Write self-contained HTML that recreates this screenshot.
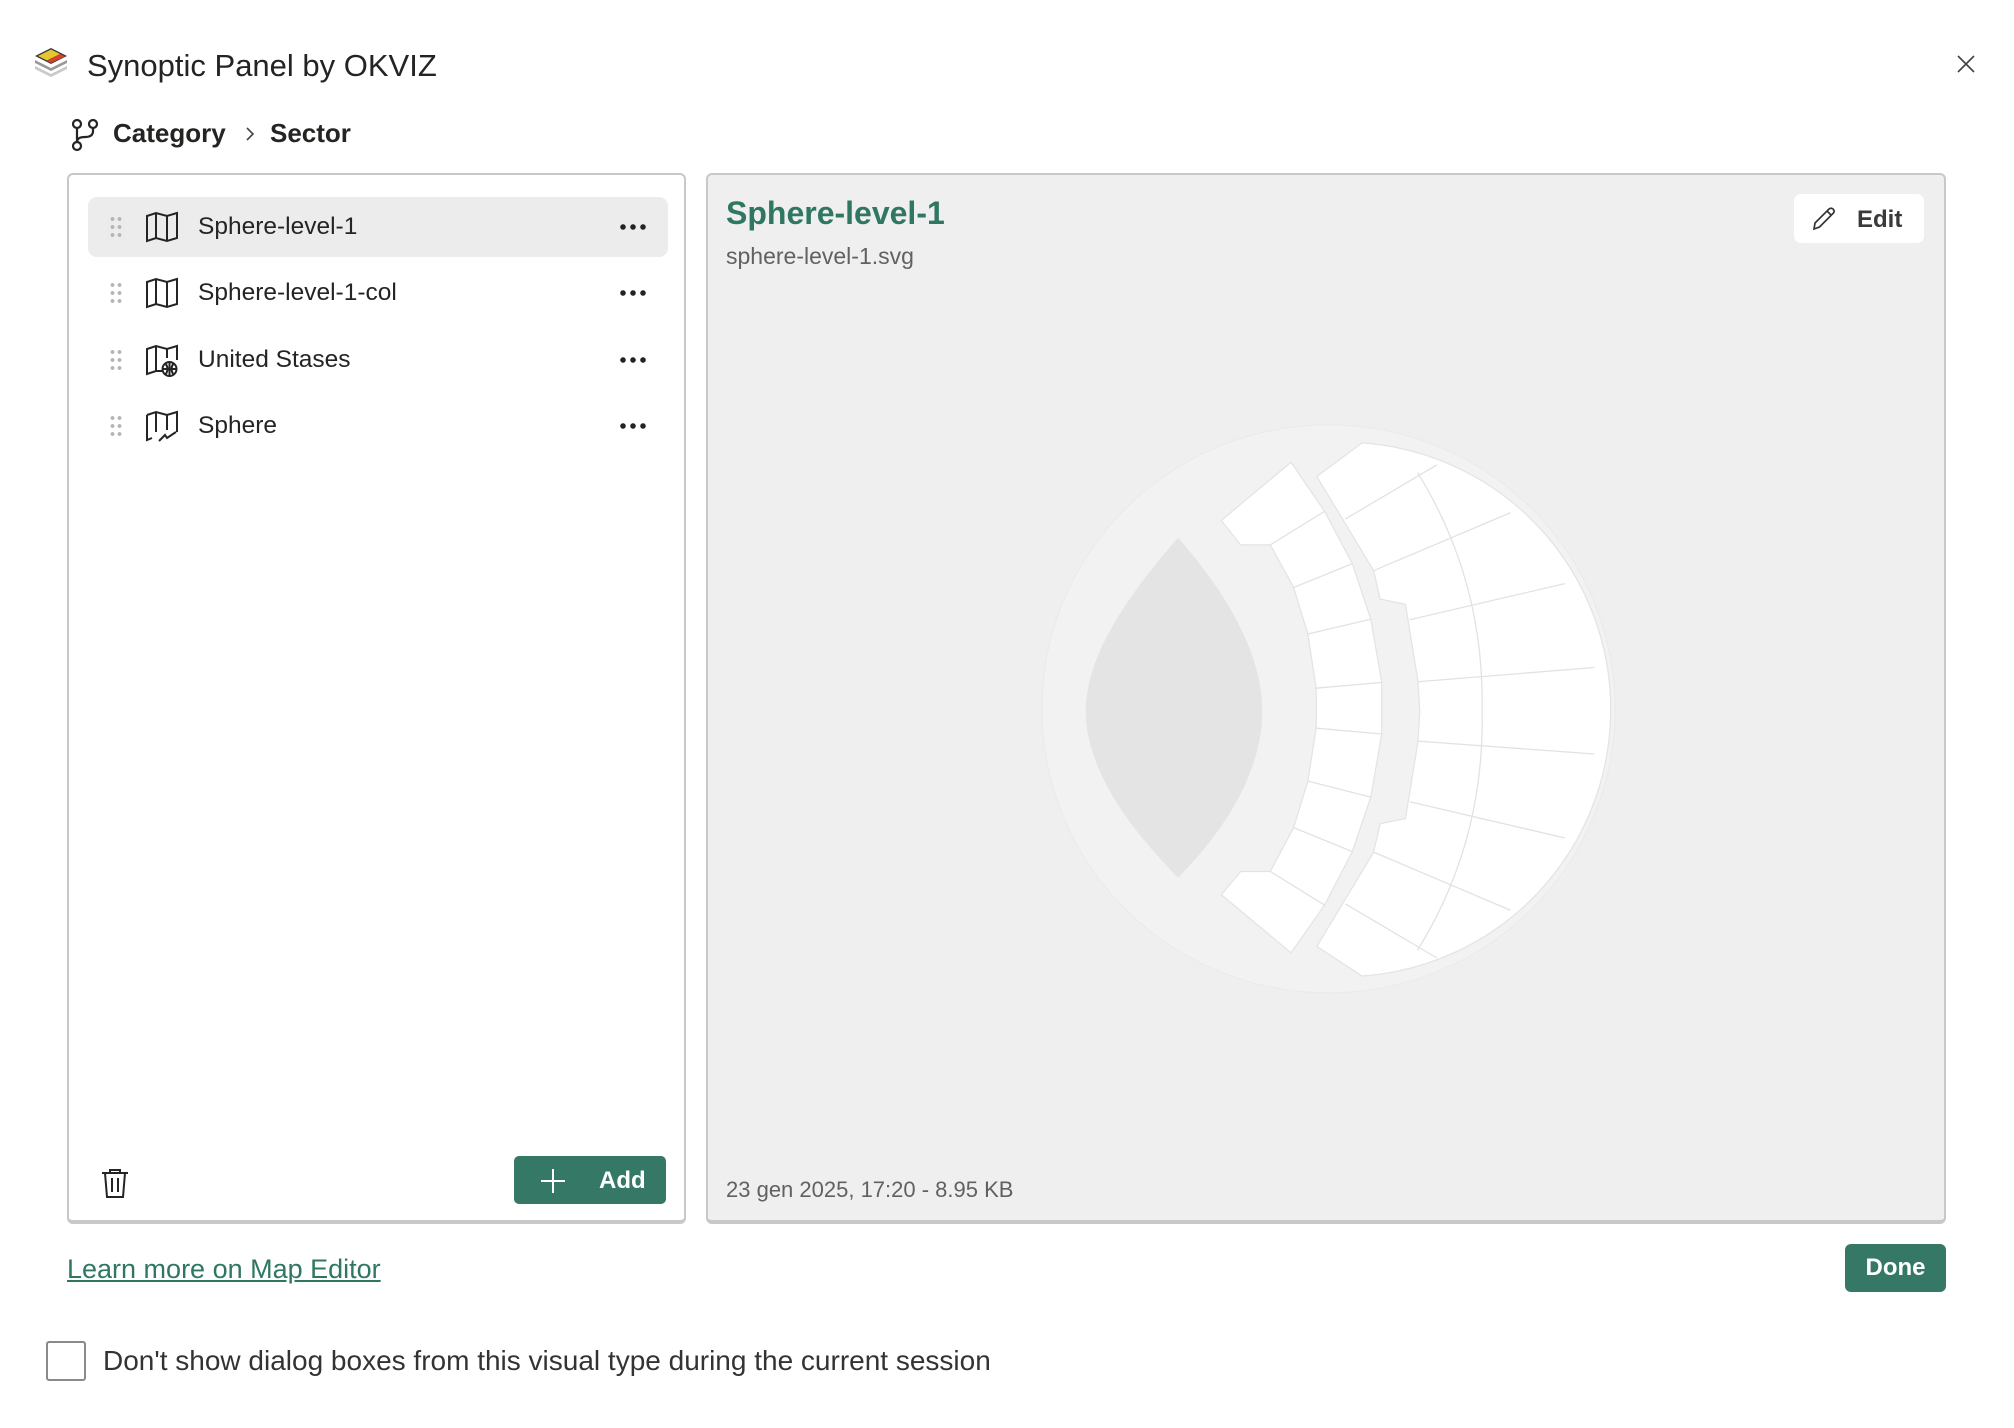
<!DOCTYPE html>
<html><head><meta charset="utf-8"><style>
*{box-sizing:border-box;margin:0;padding:0}
body{width:2014px;height:1428px;background:#fff;position:relative;overflow:hidden;font-family:"Liberation Sans",sans-serif;color:#252423}
.abs{position:absolute}
.title{left:87px;top:48px;font-size:31px;color:#252423}
.crumb{top:118px;font-size:26px;font-weight:bold}
.lp{left:67px;top:173px;width:619px;height:1051px;border:2px solid #c8c8c8;border-bottom-width:4px;border-radius:6px;background:#fff}
.rp{left:706px;top:173px;width:1240px;height:1051px;border:2px solid #c8c8c8;border-bottom-width:4px;border-radius:6px;background:#efefef}
.row{position:absolute;left:19px;width:580px;height:60px;border-radius:9px}
.row .t{position:absolute;left:110px;top:16px;font-size:24.5px;color:#252423}
.dots{position:absolute;left:21px;top:18px;width:14px;height:24px;background-image:radial-gradient(circle,#b5b5b5 1.7px,transparent 2.2px);background-size:7px 8px}
.ell{position:absolute;left:530px;top:27px;width:30px;height:6px;background-image:radial-gradient(circle,#252423 2.5px,transparent 3px);background-size:10px 6px}
.ico{position:absolute;left:57px;top:14px}
</style></head><body>
<svg class="abs" style="left:32px;top:46px" width="38" height="36" viewBox="0 0 38 36">
<path d="M3 20 L19 28 L35 20 L35 23 L19 31 L3 23Z" fill="#c9c9c9"/>
<path d="M3 14 L19 22 L35 14 L35 17 L19 25 L3 17Z" fill="#9a9a9a"/>
<path d="M3 10 L19 2 L35 10 L19 18Z" fill="#3a3a3a"/>
<path d="M6 10 L19 3.5 L28 8 L15 14.5Z" fill="#e8c531"/>
<path d="M6 10.5 L15 15 L17 16 L8 11.5Z" fill="#4e9a45"/>
<path d="M28 8 L33 10.5 L19 17 L15 15Z" fill="#d9402b"/>
</svg>
<div class="abs title">Synoptic Panel by OKVIZ</div>
<svg class="abs" style="left:1956px;top:54px" width="20" height="20" viewBox="0 0 20 20"><path d="M2 2L18 18M18 2L2 18" stroke="#444" stroke-width="1.6"/></svg>

<svg class="abs" style="left:70px;top:118px" width="30" height="34" viewBox="0 0 30 34" fill="none" stroke="#252423" stroke-width="2.2"><circle cx="7" cy="6" r="4"/><circle cx="23" cy="6" r="4"/><circle cx="7" cy="28" r="4"/><path d="M7 10V24M23 10V13Q23 19 15 19Q7 19 7 24"/></svg>
<div class="abs crumb" style="left:113px">Category</div>
<svg class="abs" style="left:244px;top:126px" width="12" height="16" viewBox="0 0 12 16"><path d="M3 2L9 8L3 14" stroke="#444" stroke-width="1.6" fill="none"/></svg>
<div class="abs crumb" style="left:270px">Sector</div>

<div class="abs lp">
 <div class="row" style="top:22px;background:#ececec"><div class="dots"></div>
  <svg class="ico" width="34" height="32" viewBox="0 0 34 32" fill="none" stroke="#252423" stroke-width="2"><path d="M2 5L11 2L22 5L32 2V27L22 30L11 27L2 30Z M11 2V27M22 5V30"/></svg>
  <div class="t">Sphere-level-1</div><div class="ell"></div></div>
 <div class="row" style="top:88px"><div class="dots"></div>
  <svg class="ico" width="34" height="32" viewBox="0 0 34 32" fill="none" stroke="#252423" stroke-width="2"><path d="M2 5L11 2L22 5L32 2V27L22 30L11 27L2 30Z M11 2V27M22 5V30"/></svg>
  <div class="t">Sphere-level-1-col</div><div class="ell"></div></div>
 <div class="row" style="top:155px"><div class="dots"></div>
  <svg class="ico" width="34" height="34" viewBox="0 0 34 34" fill="none" stroke="#252423" stroke-width="2"><path d="M17 27L11 27L2 30V5L11 2L22 5L32 2V16M11 2V27M22 5V14"/><circle cx="24.5" cy="25" r="7"/><path d="M17.5 25H31.5M24.5 18V32M20.5 19.5Q24.5 25 20.5 30.5M28.5 19.5Q24.5 25 28.5 30.5"/></svg>
  <div class="t">United Stases</div><div class="ell"></div></div>
 <div class="row" style="top:221px"><div class="dots"></div>
  <svg class="ico" width="34" height="34" viewBox="0 0 34 34" fill="none" stroke="#252423" stroke-width="2"><path d="M2 5L11 2L22 5L32 2V22M11 2V22M22 5V20M2 5V30L7 28M14 31L20 25L22 28L31 22"/></svg>
  <div class="t">Sphere</div><div class="ell"></div></div>
 <svg class="abs" style="left:31px;top:992px" width="30" height="32" viewBox="0 0 30 32" fill="none" stroke="#252423" stroke-width="2"><path d="M2 6H28M10 6V3H20V6M5 6L7 30H23L25 6M12 11V25M18 11V25"/></svg>
 <div class="abs" style="left:445px;top:981px;width:152px;height:48px;background:#367866;border-radius:5px;color:#fff;font-weight:bold;font-size:24px">
  <svg class="abs" style="left:26px;top:12px" width="26" height="26" viewBox="0 0 26 26"><path d="M13 1V25M1 13H25" stroke="#fff" stroke-width="2"/></svg>
  <span class="abs" style="left:85px;top:11px">Add</span></div>
</div>

<div class="abs rp">
 <div class="abs" style="left:18px;top:20px;font-size:32px;font-weight:bold;color:#2f7762">Sphere-level-1</div>
 <div class="abs" style="left:18px;top:68px;font-size:23px;color:#616161">sphere-level-1.svg</div>
 <div class="abs" style="left:1086px;top:19px;width:130px;height:49px;background:#fff;border-radius:7px">
  <svg class="abs" style="left:17px;top:12px" width="26" height="26" viewBox="0 0 26 26" fill="none" stroke="#333" stroke-width="1.7"><path d="M3 23L4 17L18 3Q20 1.5 22 3Q24 5 22.5 7L8.5 21Z M16 5L20.5 9.5"/></svg>
  <span class="abs" style="left:63px;top:12px;font-size:24px;font-weight:bold;color:#3a3a3a">Edit</span></div>
 <div class="abs" style="left:18px;top:1002px;font-size:22px;color:#616161">23 gen 2025, 17:20 - 8.95 KB</div>
</div>

<svg class="abs" style="left:0;top:0" width="2014" height="1428" viewBox="0 0 1560 1106">
 <ellipse cx="1029" cy="549" rx="222" ry="220" fill="#f2f2f2" stroke="#ebebeb" stroke-width="1"/>
 <path d="M912.5 416.5 C870 465 841 510 841 551 C841 592 870 637 912.5 679.7 C955 637 977.7 592 977.7 551 C977.7 510 955 465 912.5 416.5Z" fill="#e4e4e4"/>
 <g fill="#fff" stroke="#e4e4e4" stroke-width="1">
 <path d="M946 403 L1000 358 L1026 396 L1047.5 436.5 L1061.8 479.6 L1070.3 528.5 L1070.3 568.5 L1061.8 617.4 L1047.5 659.6 L1026 701 L1000 738 L946 693 L961 675 L984 675 L1002 641 L1013 605 L1019.5 564 L1019.5 533 L1013 491 L1002 455 L984 422 L961 422Z"/>
 <path d="M1020 369 L1055 343 A207 207 0 0 1 1055 756 L1020 733 L1064 660 L1069 638 L1088.6 634 L1098.4 574 L1099.7 551 L1098.4 528 L1088.6 468 L1069 464 L1064 442Z"/>
 </g>
 <g stroke="#e2e2e2" stroke-width="1" fill="none">
 <path d="M984 422L1026 396M1002 455L1047.5 436.5M1013 491L1061.8 479.6M1019.5 533L1070.3 528.5M1019.5 564L1070.3 568.5M1013 605L1061.8 617.4M1002 641L1047.5 659.6M984 675L1026 701"/>
 <path d="M1042 402L1113 360M1064 442L1170 397M1092 480L1212 452M1098 528L1235 517M1098 574L1235 584M1092 621L1212 649M1064 660L1170 705M1042 700L1113 742"/>
 <path d="M1098 366 Q1150 450 1148 551 Q1150 652 1098 736"/>
 </g>
</svg>

<a class="abs" style="left:67px;top:1254px;font-size:27px;color:#2f7762;text-decoration:underline">Learn more on Map Editor</a>
<div class="abs" style="left:1855px;top:1244px;width:101px;height:48px;background:#367866;border-radius:6px;color:#fff;font-weight:bold;font-size:24px;text-align:center;line-height:48px;transform:translateX(-10px)">Done</div>
<div class="abs" style="left:46px;top:1341px;width:40px;height:40px;border:2px solid #8a8a8a;border-radius:3px"></div>
<div class="abs" style="left:103px;top:1345px;font-size:28px;color:#333">Don't show dialog boxes from this visual type during the current session</div>
</body></html>
